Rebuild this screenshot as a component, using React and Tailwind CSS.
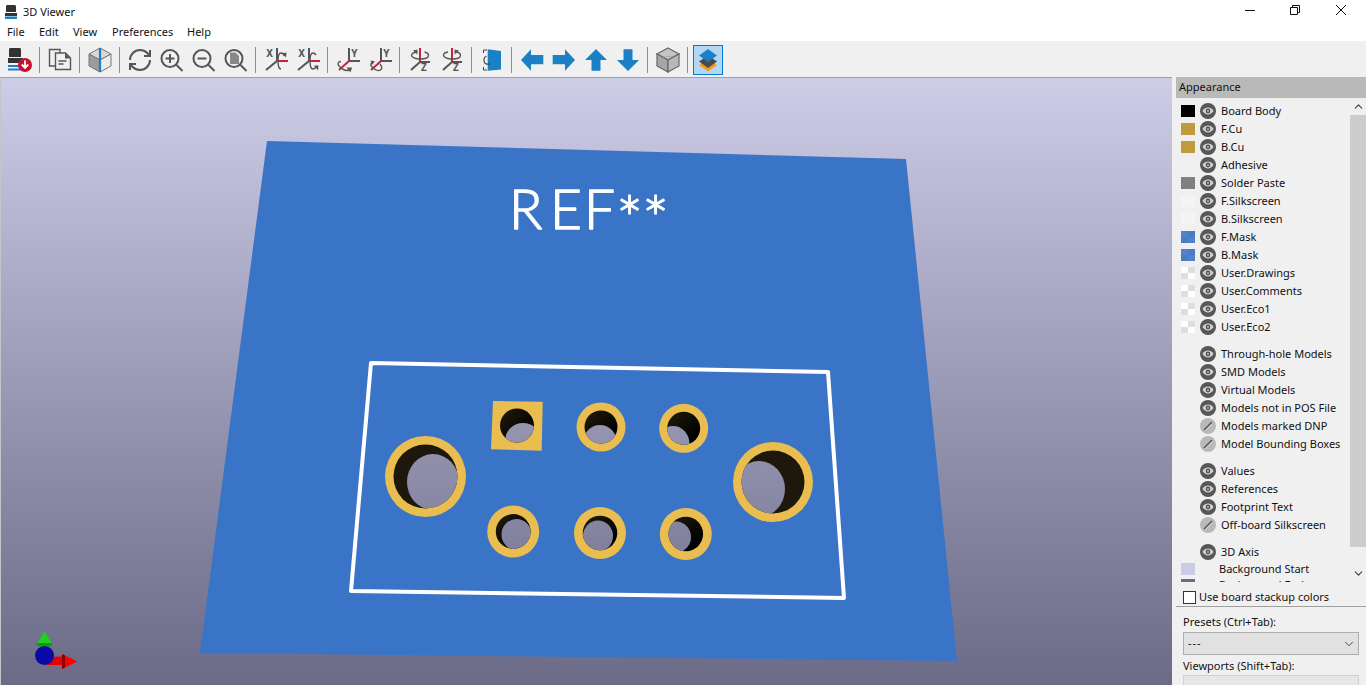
import React from 'react'
import { ChevronDown, ChevronUp } from 'lucide-react'

const FONT = "font-['Noto_Sans',sans-serif]"
const GREY = '#555555'
const BLUE = '#1b80c4'

function LayersBrand() {
    return (
        <svg width="12" height="14" viewBox="0 0 12 14">
            <path d="M2 0h8l1 1v6H1V1z" fill="#333" />
            <rect x="0" y="8" width="12" height="3" fill="#333" />
            <rect x="0" y="11.5" width="12" height="2.5" fill={BLUE} />
        </svg>
    )
}

function Icon({ children }) {
    return <svg width="24" height="24" viewBox="0 0 24 24" fill="none" className="overflow-visible">{children}</svg>
}

function AxisLabel({ x, y, children }) {
    return <text x={x} y={y} fontSize="10" fontWeight="700" fill={GREY} textAnchor="middle" fontFamily="Noto Sans, sans-serif">{children}</text>
}

const icons = {
    download: (
        <Icon>
            <path d="M2 0h10l1 1v8H1V1z" fill="#333" />
            <rect x="0" y="10" width="15" height="5" fill="#333" />
            <rect x="0" y="17" width="13" height="2" fill={BLUE} />
            <rect x="0" y="20.5" width="13" height="2" fill={BLUE} />
            <circle cx="17" cy="17" r="7" fill="#c8102e" />
            <path d="M17 12.5v7M13.8 16.5l3.2 3.4 3.2-3.4" stroke="#fff" strokeWidth="2" />
        </Icon>
    ),
    copy: (
        <Icon>
            <path d="M7 18H1.5V1.5H12V5" stroke={GREY} strokeWidth="1.4" />
            <path d="M7.5 5h10l5 5v11.5h-15z" stroke={GREY} strokeWidth="1.4" fill="#f0f0f0" />
            <path d="M17 5v5.5h5.5" fill={GREY} />
            <path d="M10.5 13h8M10.5 16h5" stroke={GREY} strokeWidth="1.3" />
        </Icon>
    ),
    cube: (
        <Icon>
            <path d="M12 0l11 6-11 6L1 6z" fill="#d9d9d9" stroke="#777" />
            <path d="M1 6l11 6v12L1 18z" fill="#9c9c9c" stroke="#777" />
            <path d="M23 6l-11 6v12l11-6z" fill="#ebebeb" stroke="#777" />
            <path d="M12 0v24" stroke={BLUE} strokeWidth="2.2" />
        </Icon>
    ),
    refresh: (
        <Icon>
            <path d="M2 12a10 10 0 0 1 10-10 10.5 10.5 0 0 1 7.3 3L22 8" stroke={GREY} strokeWidth="2" />
            <path d="M22 2v6h-6" stroke={GREY} strokeWidth="2" />
            <path d="M22 12a10 10 0 0 1-10 10 10.5 10.5 0 0 1-7.3-3L2 16" stroke={GREY} strokeWidth="2" />
            <path d="M8 16H2v6" stroke={GREY} strokeWidth="2" />
        </Icon>
    ),
    zoomIn: (
        <Icon>
            <circle cx="10" cy="10.5" r="8.5" stroke={GREY} strokeWidth="2" />
            <path d="M16.5 17l6 6" stroke={GREY} strokeWidth="2" />
            <path d="M10 6v9M5.5 10.5h9" stroke={GREY} strokeWidth="2" />
        </Icon>
    ),
    zoomOut: (
        <Icon>
            <circle cx="10" cy="10.5" r="8.5" stroke={GREY} strokeWidth="2" />
            <path d="M16.5 17l6 6" stroke={GREY} strokeWidth="2" />
            <path d="M5.5 10.5h9" stroke={GREY} strokeWidth="2" />
        </Icon>
    ),
    zoomFit: (
        <Icon>
            <path d="M6 4.5h5.5L15 8v8H6z" fill="#888" />
            <circle cx="10" cy="10.5" r="8.5" stroke={GREY} strokeWidth="2" />
            <path d="M16.5 17l6 6" stroke={GREY} strokeWidth="2" />
        </Icon>
    ),
    rotXa: (
        <Icon>
            <path d="M13 0v13L2 22" stroke={GREY} strokeWidth="2" />
            <path d="M13 13h11" stroke="#c8213f" strokeWidth="2" />
            <AxisLabel x="5.5" y="9">X</AxisLabel>
            <path d="M17 21c-2.500 0-3-4-3-8s.7-8 3-8 3 1.500 3.500 3" stroke={GREY} strokeWidth="1.4" />
            <path d="M18 5.500l4.500-1-.5 5z" fill={GREY} />
        </Icon>
    ),
    rotXb: (
        <Icon>
            <path d="M13 0v13L2 22" stroke={GREY} strokeWidth="2" />
            <path d="M13 13h11" stroke="#c8213f" strokeWidth="2" />
            <AxisLabel x="5.5" y="9">X</AxisLabel>
            <path d="M20 7c-1-1.500-2-2-3-2-2.300 0-3 4-3 8s.7 8 3 8 2.500-1 3-2.500" stroke={GREY} strokeWidth="1.4" />
            <path d="M18 17.500l4.500 0-.5 5z" fill={GREY} />
        </Icon>
    ),
    rotYa: (
        <Icon>
            <path d="M13 0v13h11" stroke={GREY} strokeWidth="2" />
            <path d="M13 13L3 22" stroke="#c8213f" strokeWidth="2" />
            <AxisLabel x="18.500" y="9">Y</AxisLabel>
            <path d="M5 13.500c-3 0-4 2.500-1.500 5s6.500 5 9.500 3.500" stroke={GREY} strokeWidth="1.4" />
            <path d="M10.500 19.500l5.500 0-1.500 5z" fill={GREY} />
        </Icon>
    ),
    rotYb: (
        <Icon>
            <path d="M13 0v13h11" stroke={GREY} strokeWidth="2" />
            <path d="M13 13L3 22" stroke="#c8213f" strokeWidth="2" />
            <AxisLabel x="18.500" y="9">Y</AxisLabel>
            <path d="M5 15c-2.500 0-3 2-1 4s6 4.500 8.500 3 1-4-.5-6" stroke={GREY} strokeWidth="1.4" />
            <path d="M2.500 12.500l4.500 1-3 3.500z" fill={GREY} />
        </Icon>
    ),
    rotZa: (
        <Icon>
            <path d="M12 14h10M12 14L3 22" stroke={GREY} strokeWidth="2" />
            <path d="M12 0v14" stroke="#c8213f" strokeWidth="2" />
            <AxisLabel x="16" y="23">Z</AxisLabel>
            <path d="M9 4C5 4.500 3.500 6 3.500 7.500S7 11 12 11s8.500-1.500 8.500-3.500-2-3-4-3.500" stroke={GREY} strokeWidth="1.4" />
            <path d="M5 2.500l4.500-1 0 5z" fill={GREY} />
        </Icon>
    ),
    rotZb: (
        <Icon>
            <path d="M12 14h10M12 14L3 22" stroke={GREY} strokeWidth="2" />
            <path d="M12 0v14" stroke="#c8213f" strokeWidth="2" />
            <AxisLabel x="16" y="23">Z</AxisLabel>
            <path d="M8 4C5 4.500 3.500 6 3.500 7.500S7 11 12 11s8.500-1.500 8.500-3.500-1-3-4-3.500" stroke={GREY} strokeWidth="1.4" />
            <path d="M19 2.500l-4.500-1 0 5z" fill={GREY} />
        </Icon>
    ),
    flip: (
        <Icon>
            <path d="M7 2H3.500v3M3.500 19v3H7" stroke="#444" strokeWidth="1" />
            <path d="M7.700 1.300L21 3v18.500L7.700 22.700z" fill={BLUE} />
            <path d="M6.500 8.500C4.800 8.500 4 10 4 12s1 3.800 3 4.200h3" stroke="#444" strokeWidth="1.200" />
        </Icon>
    ),
    left: <Icon><path d="M1 12L11 1.300V7h12.300v9.300H11v6.400z" fill={BLUE} /></Icon>,
    right: <Icon><path d="M23 12L13 1.300V7H.700v9.300H13v6.400z" fill={BLUE} /></Icon>,
    up: <Icon><path d="M12 1L23 12h-6.500v10.700h-9V12H1z" fill={BLUE} /></Icon>,
    down: <Icon><path d="M12 23L23 12h-6.500V1.300h-9V12H1z" fill={BLUE} /></Icon>,
    box: (
        <Icon>
            <path d="M12 0l11 6-11 6L1 6z" fill="#c6c6c6" stroke="#666" strokeWidth="1.200" />
            <path d="M1 6l11 6v12L1 18z" fill="#a6a6a6" stroke="#666" strokeWidth="1.200" />
            <path d="M23 6l-11 6v12l11-6z" fill="#b8b8b8" stroke="#666" strokeWidth="1.200" />
            <path d="M7 9l10-1" stroke="#999" strokeWidth="0.6" />
        </Icon>
    ),
    layers: (
        <Icon>
            <path d="M12 11l9 6-9 6.500L3 17z" fill="#f39a1e" />
            <path d="M12 7.500l9 6-9 6.500-9-6.500z" fill="#4b4b4b" />
            <path d="M12 1l9 6.500-9 6.500-9-6.500z" fill={BLUE} />
        </Icon>
    ),
}

const toolbar = [
    ['download'], ['copy'], ['cube'],
    ['refresh', 'zoomIn', 'zoomOut', 'zoomFit'],
    ['rotXa', 'rotXb'], ['rotYa', 'rotYb'], ['rotZa', 'rotZb'],
    ['flip'], ['left', 'right', 'up', 'down'], ['box'],
]

function ToolButton({ name }) {
    return <div className="flex h-[30px] w-[32px] items-center justify-center">{icons[name]}</div>
}

function Toolbar() {
    return (
        <div className="flex h-[36px] shrink-0 items-center bg-[#f0f0f0] pl-[4px] pt-[2px]">
            {toolbar.map((group, i) => (
                <React.Fragment key={i}>
                    {group.map((name) => <ToolButton key={name} name={name} />)}
                    <div className="ml-[3px] mr-[4px] h-[26px] w-px bg-[#8c8c8c]" />
                </React.Fragment>
            ))}
            <div className="ml-px flex h-[30px] w-[30px] items-center justify-center border border-[#0078d7] bg-[#b3d7f3]">
                {icons.layers}
            </div>
        </div>
    )
}

function Swatch({ kind }) {
    if (kind === 'none') return <div className="h-[12px] w-[14px]" />
    if (kind === 'check') {
        return (
            <svg width="14" height="12" viewBox="0 0 14 12">
                <rect width="14" height="12" fill="#fff" />
                <rect x="7" width="7" height="6" fill="#dedede" />
                <rect y="6" width="7" height="6" fill="#dedede" />
            </svg>
        )
    }
    if (kind === 'mask') {
        return (
            <svg width="14" height="12" viewBox="0 0 14 12">
                <rect width="14" height="12" fill="#4f84cc" />
                <rect x="7" width="7" height="6" fill="#4a7cc2" />
                <rect y="6" width="7" height="6" fill="#4a7cc2" />
            </svg>
        )
    }
    return <div className={`h-[12px] w-[14px] ${kind}`} />
}

function Eye({ off }) {
    if (off) {
        return (
            <svg width="16" height="16" viewBox="0 0 16 16">
                <circle cx="8" cy="8" r="8" fill="#b9b9b9" />
                <path d="M4 12l8-8" stroke="#5a5a5a" strokeWidth="1.600" />
                <path d="M5.500 12.500l7-7" stroke="#e6e6e6" strokeWidth="0.800" />
            </svg>
        )
    }
    return (
        <svg width="16" height="16" viewBox="0 0 16 16">
            <circle cx="8" cy="8" r="8" fill="#575757" />
            <path d="M2.500 8C4 5.600 6 4.600 8 4.600S12 5.600 13.500 8C12 10.400 10 11.400 8 11.400S4 10.400 2.500 8z" fill="#d5d5d5" />
            <circle cx="8" cy="8" r="2.400" fill="#575757" />
            <circle cx="8" cy="8" r="1" fill="#b0b0b0" />
        </svg>
    )
}

function Row({ label, swatch = 'none', off }) {
    return (
        <div className="flex h-[18px] items-center">
            <Swatch kind={swatch} />
            <div className="ml-[5px]"><Eye off={off} /></div>
            <span className="ml-[5px] whitespace-nowrap">{label}</span>
        </div>
    )
}

function ColorRow({ label, swatch, className = '' }) {
    return (
        <div className={`flex h-[18px] items-center ${className}`}>
            <Swatch kind={swatch} />
            <span className="ml-[24px] whitespace-nowrap">{label}</span>
        </div>
    )
}

const layers = [
    ['Board Body', 'bg-black'],
    ['F.Cu', 'bg-[#bf9b3c]'],
    ['B.Cu', 'bg-[#bf9b3c]'],
    ['Adhesive', 'none'],
    ['Solder Paste', 'bg-[#808080]'],
    ['F.Silkscreen', 'bg-[#f4f4f4]'],
    ['B.Silkscreen', 'bg-[#f4f4f4]'],
    ['F.Mask', 'mask'],
    ['B.Mask', 'mask'],
    ['User.Drawings', 'check'],
    ['User.Comments', 'check'],
    ['User.Eco1', 'check'],
    ['User.Eco2', 'check'],
]

function Appearance() {
    return (
        <div className={`flex h-[608px] w-[194px] shrink-0 flex-col overflow-hidden bg-[#f0f0f0] pl-[4px] text-[11px] text-[#111] ${FONT}`}>
            <div className="flex h-[21px] shrink-0 items-center bg-[#b9b9b9] pl-[3px]">Appearance</div>
            <div className="flex h-[484px] shrink-0 overflow-hidden">
                <div className="w-[174px] pl-[5px] pt-[4px]">
                    {layers.map(([label, swatch]) => <Row key={label} label={label} swatch={swatch} />)}
                    <div className="mt-[9px]">
                        <Row label="Through-hole Models" />
                        <Row label="SMD Models" />
                        <Row label="Virtual Models" />
                        <Row label="Models not in POS File" />
                        <Row label="Models marked DNP" off />
                        <Row label="Model Bounding Boxes" off />
                    </div>
                    <div className="mt-[9px]">
                        <Row label="Values" />
                        <Row label="References" />
                        <Row label="Footprint Text" />
                        <Row label="Off-board Silkscreen" off />
                    </div>
                    <div className="mt-[9px]">
                        <Row label="3D Axis" />
                        <ColorRow label="Background Start" swatch="bg-[#cbcbe6]" className="-mt-px" />
                        <ColorRow label="Background End" swatch="bg-[#6b6b88]" className="-mt-[2px]" />
                    </div>
                </div>
                <div className="flex w-[16px] flex-col items-center text-[#444]">
                    <div className="flex h-[17px] shrink-0 items-center"><ChevronUp size={13} strokeWidth={2.2} /></div>
                    <div className="h-[432px] w-full shrink-0 bg-[#cdcdcd]" />
                    <div className="mt-auto flex h-[17px] items-center"><ChevronDown size={13} strokeWidth={2.2} /></div>
                </div>
            </div>
            <div className="flex h-[25px] shrink-0 items-center border-b border-[#a0a0a0] pl-[7px] pt-[6px]">
                <div className="h-[13px] w-[13px] border border-[#333] bg-white" />
                <span className="ml-[3px]">Use board stackup colors</span>
            </div>
            <div className="mt-[7px] shrink-0 pl-[7px] leading-[16px]">Presets (Ctrl+Tab):</div>
            <div className="ml-[7px] mt-[2px] flex h-[23px] w-[176px] shrink-0 items-center justify-between border border-[#adadad] bg-[#e1e1e1] pl-[4px] pr-[2px]">
                <span className="tracking-[1px]">---</span>
                <ChevronDown size={14} strokeWidth={1.2} />
            </div>
            <div className="mt-[3px] shrink-0 pl-[7px] leading-[16px]">Viewports (Shift+Tab):</div>
            <div className="ml-[7px] mt-[1px] h-[23px] w-[176px] shrink-0 border border-[#d0d0d0] bg-[#e6e6e6]" />
        </div>
    )
}

const pads = [
    { cx: 425.5, cy: 476.5, r: 40.5, hr: 32, lx: 433, ly: 482, lrx: 26, lry: 28 },
    { cx: 601, cy: 427, r: 24.5, hr: 16.5, lx: 600, ly: 443, lrx: 17, lry: 18 },
    { cx: 683.7, cy: 428.3, r: 24.5, hr: 16.5, lx: 673, ly: 444, lrx: 16.5, lry: 18 },
    { cx: 773, cy: 482, r: 40, hr: 31.5, lx: 759, ly: 489, lrx: 26, lry: 28 },
    { cx: 513.2, cy: 531.5, r: 26, hr: 17.4, lx: 516.5, ly: 534.5, lrx: 15, lry: 15.5 },
    { cx: 600, cy: 533, r: 26, hr: 17.3, lx: 598, ly: 536, lrx: 15, lry: 15.5 },
    { cx: 685.8, cy: 534, r: 26, hr: 17.3, lx: 676, ly: 537, lrx: 15, lry: 15.5 },
]

function Hole({ id, cx, cy, hr, lx, ly, lrx, lry }) {
    return (
        <>
            <clipPath id={id}><circle cx={cx} cy={cy} r={hr} /></clipPath>
            <circle cx={cx} cy={cy} r={hr} fill={hr > 30 ? '#1d180b' : 'url(#bore)'} />
            <ellipse cx={lx} cy={ly} rx={lrx} ry={lry} fill="url(#sky)" clipPath={`url(#${id})`} />
        </>
    )
}

function Scene() {
    return (
        <svg className="absolute left-[-1px] top-[-78px]" width="1173" height="685" viewBox="0 0 1173 685">
            <defs>
                <linearGradient id="sky" gradientUnits="userSpaceOnUse" x1="0" y1="78" x2="0" y2="685">
                    <stop offset="0" stopColor="#cdcde8" />
                    <stop offset="1" stopColor="#6b6b88" />
                </linearGradient>
                <linearGradient id="bore" x1="0" y1="0" x2="1" y2="1">
                    <stop offset="0" stopColor="#241c0c" />
                    <stop offset="0.8" stopColor="#000" />
                </linearGradient>
            </defs>
            <polygon points="267,141 906,159 957,661 200,653" fill="#3a74c6" />
            <polygon points="371,363 828,372 844,598 351,591" fill="none" stroke="#fff" strokeWidth="4" strokeLinejoin="round" />
            <text x="509 550 584" y="229" fill="#fff" stroke="#fff" strokeWidth="1.400" strokeLinejoin="round" fontFamily="Lato, sans-serif" fontWeight="300" fontSize="55">REF</text>
            <text x="616 642" y="242" fill="#fff" stroke="#fff" strokeWidth="1.200" strokeLinejoin="round" fontFamily="Lato, sans-serif" fontWeight="300" fontSize="64">**</text>
            <polygon points="493,401 542.7,401.7 541.7,450.7 491,449.3" fill="#e9bd4f" />
            <Hole id="h0" cx={517} cy={425.5} hr={17} lx={523} ly={441} lrx={18} lry={18} />
            {pads.map((p, i) => (
                <React.Fragment key={i}>
                    <circle cx={p.cx} cy={p.cy} r={p.r} fill="#e9bd4f" />
                    <Hole id={`h${i + 1}`} {...p} />
                </React.Fragment>
            ))}
            <rect x="40" y="645" width="8" height="6" fill="#1ee01e" />
            <ellipse cx="44.500" cy="644" rx="8" ry="3" fill="#129a12" />
            <path d="M44.500 631l7 12H37.500z" fill="#1fd01f" />
            <path d="M46 657l17-.5v8.500H46z" fill="#e80000" />
            <path d="M62 654l15.500 7.500L62 669z" fill="#ff0000" />
            <path d="M62 654l3 1.500v12L62 669z" fill="#8a0000" />
            <circle cx="44.500" cy="655.500" r="9.500" fill="#0a0aa8" />
        </svg>
    )
}

function App() {
    return (
        <div className={`flex h-[685px] w-[1366px] flex-col overflow-hidden bg-white ${FONT}`}>
            <div className="flex h-[24px] shrink-0 items-center">
                <div className="ml-[5px]"><LayersBrand /></div>
                <span className="ml-[6px] text-[11px] text-[#111]">3D Viewer</span>
                <svg className="ml-auto" width="122" height="24" viewBox="0 0 122 24" fill="none" stroke="#111">
                    <path d="M1 10.500h10" />
                    <path d="M46.500 7.500h7v7h-7zM48.500 7.500v-2h7v7h-2" />
                    <path d="M92 5l10 10M102 5L92 15" />
                </svg>
            </div>
            <div className="flex h-[17px] shrink-0 items-center pl-[7px] text-[11px] text-[#111]">
                <span className="w-[32px]">File</span>
                <span className="w-[34px]">Edit</span>
                <span className="w-[39px]">View</span>
                <span className="w-[75px]">Preferences</span>
                <span>Help</span>
            </div>
            <Toolbar />
            <div className="flex min-h-0 flex-1">
                <div className="flex-1 border-t border-[#a0a0a0]">
                    <div className="relative h-full overflow-hidden border-l border-[#c4c4cc] bg-linear-to-b from-[#cdcde8] to-[#6b6b88]">
                        <Scene />
                    </div>
                </div>
                <Appearance />
            </div>
        </div>
    )
}

export default App
